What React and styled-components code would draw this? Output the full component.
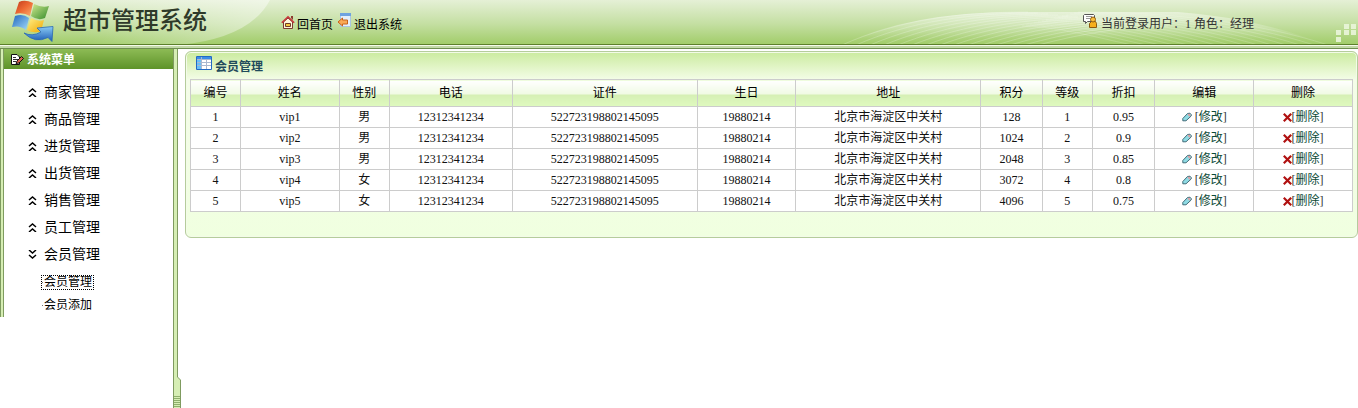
import styled, { createGlobalStyle, css } from "styled-components";

const GlobalStyle = createGlobalStyle`
    * {
        box-sizing: border-box;
    }
    body {
        margin: 0;
        background: #ffffff;
        color: #000000;
        font-family: "Liberation Serif", "Noto Sans CJK SC", serif;
        font-size: 12px;
        line-height: 20px;
    }
`;

const Page = styled.div`
    min-height: 100vh;
    display: flex;
    flex-direction: column;
`;

const Header = styled.header`
    position: relative;
    height: 49px;
    display: flex;
    align-items: flex-start;
    background: linear-gradient(#e5f0d6, #c4dfa2 50%, #9bc95f);
    border-bottom: 1px solid #6f8f50;
    overflow: hidden;

    &::after {
        content: "";
        position: absolute;
        left: 0;
        right: 0;
        bottom: 0;
        height: 3px;
        border-top: 1px solid #5c802b;
        background: linear-gradient(#f4faea 50%, #c3d9a8 50%);
    }
`;

const Glow = styled.svg`
    position: absolute;
    top: 0;
    left: 0;
`;

const Waves = styled.svg`
    position: absolute;
    top: 0;
    right: 0;
`;

const Brand = styled.h1`
    position: relative;
    width: 281px;
    margin: 0;
    padding-left: 12px;
    display: flex;
    gap: 8px;
    color: #2f3a2a;
    font-size: 24px;
    font-weight: 500;
    line-height: 42px;
`;

const TopNav = styled.nav`
    position: relative;
    flex: 1;
    display: flex;
    gap: 4px;
    padding-top: 15px;
`;

const TopLink = styled.a`
    display: flex;
    gap: 2px;
    color: #000000;
    text-decoration: none;

    svg {
        margin-top: ${(props) => (props.$raised ? "-2px" : "0")};
    }
`;

const UserInfo = styled.div`
    position: relative;
    width: 275px;
    display: flex;
    gap: 3px;
    padding-top: 14px;
    color: #333333;
`;

const Body = styled.div`
    flex: 1;
    display: flex;
`;

const Sidebar = styled.aside`
    width: 173px;
    align-self: flex-start;
    display: flex;
`;

const edge = css`
    border: solid #7f9b60;
    border-width: 0 1px;
    background: #d6eeb4;
`;

const SideEdge = styled.div`
    width: 4px;
    ${edge}
`;

const SideContent = styled.div`
    flex: 1;
`;

const SideTitle = styled.h2`
    height: 20px;
    margin: 0;
    padding: 1px 0 0 7px;
    display: flex;
    align-items: center;
    gap: 3px;
    color: #ffffff;
    background: linear-gradient(#8dbb55, #5e9329);
    font-size: 12px;
    line-height: 20px;
`;

const Menu = styled.ul`
    margin: 0;
    padding: 10px 0 0;
    list-style: none;
`;

const MenuButton = styled.button`
    width: 100%;
    height: 27px;
    padding: 0 0 0 24px;
    display: flex;
    align-items: center;
    gap: 7px;
    border: none;
    background: none;
    color: #000000;
    font: inherit;
    font-size: 14px;
    cursor: pointer;
`;

const SubMenu = styled.ul`
    margin: 0;
    padding: 3px 0 0 37px;
    list-style: none;
`;

const SubItem = styled.li`
    height: 23px;
    display: flex;
    align-items: center;
`;

const SubLink = styled.a`
    display: flex;
    align-items: center;
    gap: 1px;
    padding-right: 1px;
    border: 1px dotted ${(props) => (props.$active ? "#000000" : "transparent")};
    color: #000000;
    line-height: 13px;
    text-decoration: none;

    &::before {
        content: "";
        width: 1px;
        height: 1px;
        background: #777777;
    }
`;

const Splitter = styled.div`
    width: 12px;
    display: flex;
    flex-direction: column;
`;

const Rail = styled.div`
    flex: 1;
    width: 5px;
    ${edge}
`;

const Main = styled.main`
    flex: 1;
    padding-top: 2px;
`;

const Panel = styled.section`
    padding: 0 4px 25px;
    border: 1px solid #b5cc9c;
    border-radius: 6px;
    background: linear-gradient(#cbeb9f, #f4fde8 28px, #f0ffe0);
    box-shadow: inset 0 0 0 1px #f3fbe8;
`;

const PanelTitle = styled.h2`
    height: 27px;
    margin: 0;
    padding: 4px 0 0 6px;
    display: flex;
    gap: 3px;
    color: #1f4a5c;
    font-size: 12px;
    line-height: 22px;
`;

const Table = styled.table`
    width: 100%;
    table-layout: fixed;
    border-collapse: collapse;
    background: #ffffff;
    text-align: center;
`;

const Th = styled.th`
    width: ${(props) => props.$width}%;
    height: 27px;
    padding: 0;
    border: 1px solid #cccccc;
    background: linear-gradient(#ffffff, #f0fae4 52%, #d5efb4 54%, #dffabf);
    font-weight: normal;
`;

const Td = styled.td`
    height: 21px;
    padding: 0;
    border: 1px solid #cccccc;
    line-height: 20px;
    color: #111111;
`;

const Action = styled.a`
    display: flex;
    justify-content: center;
    align-items: center;
    gap: ${(props) => props.$gap}px;
    color: #0b4a36;
    text-decoration: none;
`;

const Bracket = styled.span`
    color: #333333;
`;

const Logo = () => (
    <svg width="43" height="43" viewBox="0 0 43 43" aria-hidden="true">
        <defs>
            <linearGradient id="flagRed" x2="1" y2="1"><stop stopColor="#c0391c" /><stop offset="0.5" stopColor="#ee6a33" /><stop offset="1" stopColor="#f9b070" /></linearGradient>
            <linearGradient id="flagGreen" x2="1" y2="1"><stop stopColor="#d2ea90" /><stop offset="1" stopColor="#358c2b" /></linearGradient>
            <linearGradient id="flagBlue" x2="1" y2="1"><stop stopColor="#1f66bd" /><stop offset="1" stopColor="#a5dcfb" /></linearGradient>
            <linearGradient id="flagYellow" x2="1" y2="1"><stop stopColor="#fff08a" /><stop offset="1" stopColor="#f0a800" /></linearGradient>
            <linearGradient id="arrow" x2="0" y2="1"><stop stopColor="#8accf5" /><stop offset="1" stopColor="#1c5bb5" /></linearGradient>
        </defs>
        <path d="M7 2Q13-1 21 3L18 16Q11 12 3 14Z" fill="url(#flagRed)" />
        <path d="M22 4Q30 8 37 6L33 18Q26 21 19 16Z" fill="url(#flagGreen)" />
        <path d="M3 16Q11 13 17 18L14 30Q8 25 0 27Z" fill="url(#flagBlue)" />
        <path d="M19 18Q26 22 32 20L29 31Q22 34 15 30Z" fill="url(#flagYellow)" />
        <path d="M12 33Q20 37 29 32L25 28L41 26.500L40 41.500L36 37.500Q23 44 12 33Z" fill="url(#arrow)" stroke="#2a68b4" strokeWidth="0.800" />
    </svg>
);

const HomeIcon = () => (
    <svg width="14" height="14" viewBox="0 0 14 14" aria-hidden="true">
        <path d="M2.500 7L7 3L11.500 7V13.500H2.500Z" fill="#fff6dc" stroke="#7c3a30" />
        <path d="M.8 7.800L7 1.800L13.200 7.800" fill="none" stroke="#c8383c" strokeWidth="1.600" />
        <path d="M10 1H12V5L10 3Z" fill="#8c3c30" />
        <path d="M4.500 8.500H9.500V11.500H4.500Z" fill="#f5c842" stroke="#6f3d28" />
    </svg>
);

const ExitIcon = () => (
    <svg width="15" height="16" viewBox="0 0 15 16" aria-hidden="true">
        <path d="M3.500 .5H13.500V13.500H3.500Z" fill="#e5f0fb" stroke="#a9c6e4" />
        <path d="M3 0H14V3H3Z" fill="#6fa3e0" />
        <path d="M1 9L5.500 5V7H10.500V11H5.500V13Z" fill="#f9a956" stroke="#c8621a" />
    </svg>
);

const UserIcon = () => (
    <svg width="15" height="15" viewBox="0 0 15 15" aria-hidden="true">
        <path d="M1.500 .5H10.500L11.500 1.500V7.500H4.500L2.500 9.500V7.500H.5V1.500Z" fill="#ffffff" stroke="#555555" />
        <path d="M3 2.500H9M3 4.500H7" stroke="#999999" />
        <path d="M6.500 13.500V9.500L8.500 7.500H12.500L13.500 9.500V13.500Z" fill="#f6b01c" stroke="#8c5a10" />
        <circle cx="10" cy="5.500" r="2.500" fill="#f9bf3c" stroke="#8c5a10" />
    </svg>
);

const NoteIcon = () => (
    <svg width="13" height="13" viewBox="0 0 13 13" aria-hidden="true">
        <path d="M.5 1.500H6L8.500 4V11.500H.5Z" fill="#ffffff" stroke="#111111" />
        <path d="M2 4.500H5M2 6.500H7M2 8.500H5" stroke="#333333" />
        <path d="M5 10.500L6 8L10.500 3.500L12.500 5.500L8 10Z" fill="#d9624c" stroke="#111111" />
    </svg>
);

const GridIcon = () => (
    <svg width="16" height="14" viewBox="0 0 16 14" aria-hidden="true">
        <path d="M.5 .5H15.500V13.500H.5Z" fill="#ffffff" stroke="#2369c4" />
        <path d="M1 1H15V3H1Z" fill="#3b8de8" />
        <path d="M1 3H5V13H1Z" fill="#68c0f8" />
        <path d="M5.500 1V13M10.500 3V13M1 3.500H15M1 6.500H15M1 9.500H15" stroke="#a9b8d0" />
    </svg>
);

const ChevronIcon = ({ down }) => (
    <svg width="9" height="9" viewBox="0 0 9 9" aria-hidden="true">
        <path
            d={down ? "M1 0L4.500 3L8 0M1 5L4.500 8L8 5" : "M1 4L4.500 1L8 4M1 9L4.500 6L8 9"}
            fill="none"
            stroke="#000000"
            strokeWidth="1.500"
        />
    </svg>
);

const PencilIcon = () => (
    <svg width="10" height="10" viewBox="0 0 10 10" aria-hidden="true">
        <path d="M.8 8.800V6.500L5.500 1.500L8 1.200L9.200 2.500V4L4 8.800Z" fill="#8fdbe4" stroke="#35606c" strokeWidth="0.900" />
        <path d="M5.500 2.500L7 1.600L8.800 3L7.500 4.800Z" fill="#dda0a4" />
    </svg>
);

const CrossIcon = () => (
    <svg width="9" height="9" viewBox="0 0 9 9" aria-hidden="true">
        <path d="M.8 .8L8.200 8.200M8.200 .8L.8 8.200" stroke="#b01010" strokeWidth="2.200" />
    </svg>
);

const SplitHandle = () => (
    <svg width="8" height="31" viewBox="0 0 8 31" aria-hidden="true">
        <path d="M.5 -1V32H7.500V3L4.500 0V-1Z" fill="#d6eeb4" stroke="#7f9b60" />
        <path d="M1 19.500H7M1 21.500H7M1 23.500H7M1 25.500H7M1 27.500H7M1 29.500H7" stroke="#8fb06c" />
    </svg>
);

const waveLines = Array.from({ length: 15 }, (_, i) => i);

const HeaderArt = () => (
    <>
        <Glow width="280" height="45" aria-hidden="true">
            <defs>
                <linearGradient id="glow">
                    <stop offset="0.300" stopColor="#ffffff" stopOpacity="0" />
                    <stop offset="1" stopColor="#ffffff" stopOpacity="0.450" />
                </linearGradient>
            </defs>
            <path d="M0 0H270Q250 38 180 45H0Z" fill="url(#glow)" />
        </Glow>
        <Waves width="520" height="45" aria-hidden="true">
            <defs>
                <linearGradient id="haze" x2="0" y2="1">
                    <stop stopColor="#ffffff" stopOpacity="0.450" />
                    <stop offset="0.800" stopColor="#ffffff" stopOpacity="0" />
                </linearGradient>
            </defs>
            <path d="M4 45Q70 12 180 12H340Q420 18 490 45Z" fill="url(#haze)" />
            {waveLines.map((i) => (
                <path
                    key={i}
                    d={`M${4 + i * 14} 45C${60 + i * 13} ${20 + i} ${120 + i * 12} ${12 + i} ${190 + i * 10} ${12 + i}`}
                    fill="none"
                    stroke="#ffffff"
                    strokeOpacity="0.220"
                />
            ))}
            {waveLines.map((i) => (
                <path
                    key={i}
                    d={`M${240 - i * 4} ${12 + i}C${330 - i * 8} ${12 + i} ${420 - i * 12} ${22 + i} ${490 - i * 14} 45`}
                    fill="none"
                    stroke="#ffffff"
                    strokeOpacity="0.180"
                />
            ))}
            <path
                d="M506 24h5v5h-5zM513 24h5v5h-5zM498 30h5v5h-5zM506 30h5v5h-5zM513 30h5v5h-5zM498 37h5v5h-5z"
                fill="#eaf5da"
                fillOpacity="0.900"
            />
        </Waves>
    </>
);

const menus = [
    { name: "商家管理" },
    { name: "商品管理" },
    { name: "进货管理" },
    { name: "出货管理" },
    { name: "销售管理" },
    { name: "员工管理" },
    { name: "会员管理", children: ["会员管理", "会员添加"] },
];

const columns = [
    { title: "编号", width: 4.3 },
    { title: "姓名", width: 8.5 },
    { title: "性别", width: 4.3 },
    { title: "电话", width: 10.6 },
    { title: "证件", width: 15.9 },
    { title: "生日", width: 8.5 },
    { title: "地址", width: 15.9 },
    { title: "积分", width: 5.3 },
    { title: "等级", width: 4.3 },
    { title: "折扣", width: 5.4 },
    { title: "编辑", width: 8.5 },
    { title: "删除", width: 8.5 },
];

const base = {
    phone: "12312341234",
    card: "522723198802145095",
    birthday: "19880214",
    address: "北京市海淀区中关村",
};

const members = [
    { id: 1, name: "vip1", sex: "男", ...base, points: 128, level: 1, discount: 0.95 },
    { id: 2, name: "vip2", sex: "男", ...base, points: 1024, level: 2, discount: 0.9 },
    { id: 3, name: "vip3", sex: "男", ...base, points: 2048, level: 3, discount: 0.85 },
    { id: 4, name: "vip4", sex: "女", ...base, points: 3072, level: 4, discount: 0.8 },
    { id: 5, name: "vip5", sex: "女", ...base, points: 4096, level: 5, discount: 0.75 },
];

const fields = ["id", "name", "sex", "phone", "card", "birthday", "address", "points", "level", "discount"];

const MemberRow = ({ member }) => (
    <tr>
        {fields.map((field) => (
            <Td key={field}>{member[field]}</Td>
        ))}
        <Td>
            <Action href="#edit" $gap={3}>
                <PencilIcon />
                <span><Bracket>[</Bracket>修改<Bracket>]</Bracket></span>
            </Action>
        </Td>
        <Td>
            <Action href="#delete" $gap={0}>
                <CrossIcon />
                <span><Bracket>[</Bracket>删除<Bracket>]</Bracket></span>
            </Action>
        </Td>
    </tr>
);

const App = () => {
    return (
        <>
            <GlobalStyle />
            <Page>
                <Header>
                    <HeaderArt />
                    <Brand><Logo />超市管理系统</Brand>
                    <TopNav>
                        <TopLink href="#home"><HomeIcon />回首页</TopLink>
                        <TopLink href="#exit" $raised><ExitIcon />退出系统</TopLink>
                    </TopNav>
                    <UserInfo><UserIcon />当前登录用户：1 角色：经理</UserInfo>
                </Header>
                <Body>
                    <Sidebar>
                        <SideEdge />
                        <SideContent>
                            <SideTitle><NoteIcon />系统菜单</SideTitle>
                            <Menu>
                                {menus.map((menu) => (
                                    <li key={menu.name}>
                                        <MenuButton type="button">
                                            <ChevronIcon down={Boolean(menu.children)} />
                                            {menu.name}
                                        </MenuButton>
                                        {menu.children && (
                                            <SubMenu>
                                                {menu.children.map((child, i) => (
                                                    <SubItem key={child}>
                                                        <SubLink href="#member" $active={i === 0}>{child}</SubLink>
                                                    </SubItem>
                                                ))}
                                            </SubMenu>
                                        )}
                                    </li>
                                ))}
                            </Menu>
                        </SideContent>
                    </Sidebar>
                    <Splitter>
                        <Rail />
                        <SplitHandle />
                    </Splitter>
                    <Main>
                        <Panel>
                            <PanelTitle><GridIcon />会员管理</PanelTitle>
                            <Table>
                                <thead>
                                    <tr>
                                        {columns.map((column) => (
                                            <Th key={column.title} $width={column.width}>{column.title}</Th>
                                        ))}
                                    </tr>
                                </thead>
                                <tbody>
                                    {members.map((member) => (
                                        <MemberRow key={member.id} member={member} />
                                    ))}
                                </tbody>
                            </Table>
                        </Panel>
                    </Main>
                </Body>
            </Page>
        </>
    );
};

export default App;
